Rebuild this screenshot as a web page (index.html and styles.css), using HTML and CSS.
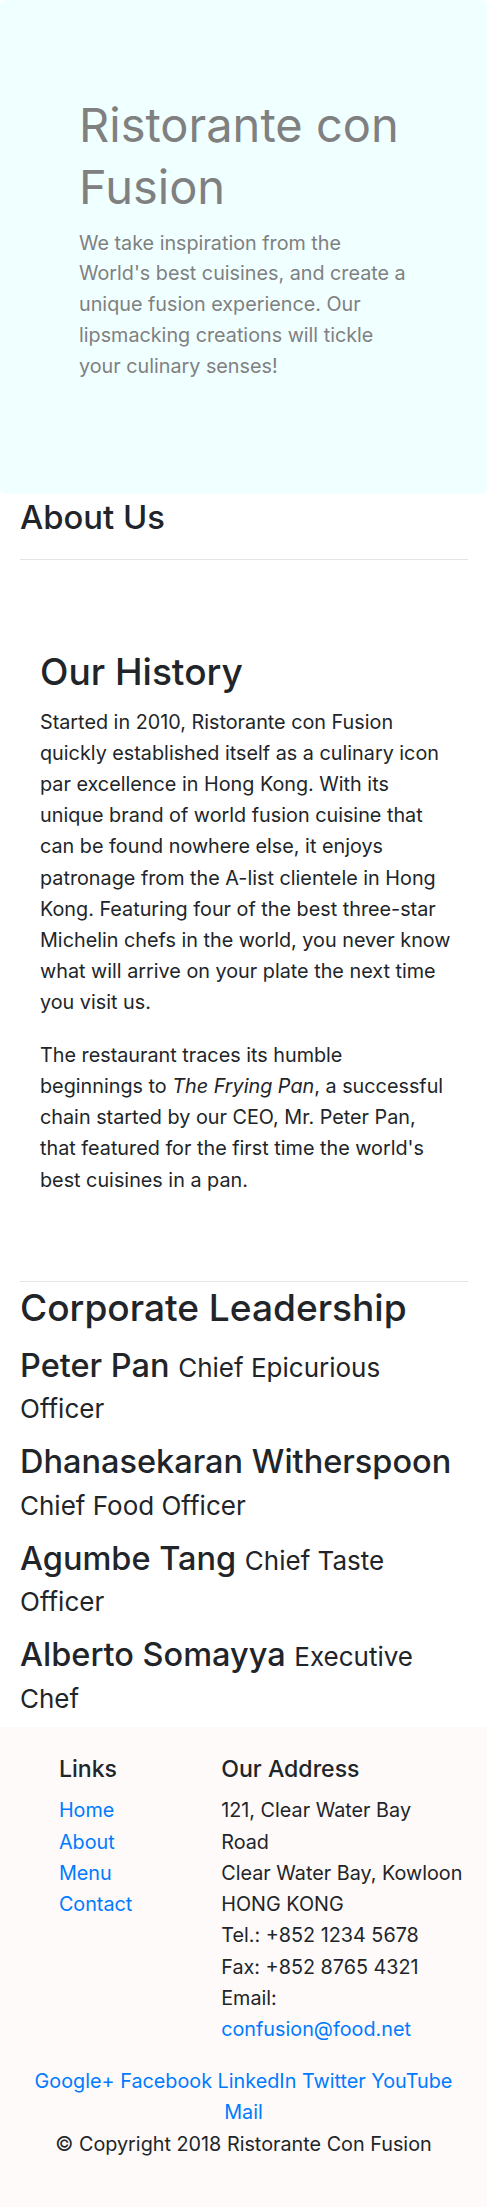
FILE: index.html
```html
<!DOCTYPE html>
<html lang="en">
<head>
<meta charset="utf-8">
<title>Ristorante con Fusion - About Us</title>
<link rel="stylesheet" href="styles.css">
</head>
<body>
<header class="jumbotron">
  <div class="jumbo-text">
    <h1 class="jumbo-title">Ristorante con Fusion</h1>
    <p class="jumbo-lead">We take inspiration from the World's best cuisines, and create a unique fusion experience. Our lipsmacking creations will tickle your culinary senses!</p>
  </div>
</header>
<main class="container">
  <section class="crumb">
    <h3 class="h3">About Us</h3>
    <hr class="rule rule-crumb">
  </section>
  <section class="history">
    <h2 class="h2">Our History</h2>
    <p class="para">Started in 2010, Ristorante con Fusion quickly established itself as a culinary icon par excellence in Hong Kong. With its unique brand of world fusion cuisine that can be found nowhere else, it enjoys patronage from the A-list clientele in Hong Kong. Featuring four of the best three-star Michelin chefs in the world, you never know what will arrive on your plate the next time you visit us.</p>
    <p class="para">The restaurant traces its humble<br>beginnings to <em>The Frying Pan</em>, a successful chain started by our CEO, Mr. Peter Pan, that featured for the first time the world's best cuisines in a pan.</p>
  </section>
  <hr class="rule rule-section">
  <section class="leaders">
    <h2 class="h2">Corporate Leadership</h2>
    <ul class="leader-list">
      <li class="leader"><h3 class="h3 leader-name">Peter Pan <small class="leader-role">Chief Epicurious Officer</small></h3></li>
      <li class="leader"><h3 class="h3 leader-name">Dhanasekaran Witherspoon <small class="leader-role">Chief Food Officer</small></h3></li>
      <li class="leader"><h3 class="h3 leader-name">Agumbe Tang <small class="leader-role">Chief Taste Officer</small></h3></li>
      <li class="leader"><h3 class="h3 leader-name">Alberto Somayya <small class="leader-role">Executive Chef</small></h3></li>
    </ul>
  </section>
</main>
<footer class="footer">
  <div class="footer-row">
    <div class="footer-col footer-links">
      <h5 class="h5">Links</h5>
      <ul class="plain-list">
        <li><a class="link" href="#">Home</a></li>
        <li><a class="link" href="#">About</a></li>
        <li><a class="link" href="#">Menu</a></li>
        <li><a class="link" href="#">Contact</a></li>
      </ul>
    </div>
    <div class="footer-col footer-address">
      <h5 class="h5">Our Address</h5>
      <address class="address">
        121, Clear Water Bay<br>Road<br>
        Clear Water Bay, Kowloon<br>
        HONG KONG<br>
        Tel.: +852 1234 5678<br>
        Fax: +852 8765 4321<br>
        Email:<br><a class="link" href="#">confusion@food.net</a>
      </address>
    </div>
  </div>
  <div class="social">
    <a class="link" href="#">Google+</a> <a class="link" href="#">Facebook</a> <a class="link" href="#">LinkedIn</a> <a class="link" href="#">Twitter</a> <a class="link" href="#">YouTube</a> <a class="link" href="#">Mail</a>
  </div>
  <p class="copyright">© Copyright 2018 Ristorante Con Fusion</p>
</footer>
</body>
</html>
```
FILE: styles.css
```css
* { box-sizing: border-box; }

body {
  margin: 0;
  font-family: Inter, "Noto Sans", "Liberation Sans", sans-serif;
  font-size: 19.8px;
  line-height: 31.2px;
  color: #212529;
  background: #fff;
}

h1, h2, h3, h5, p, ul { margin: 0; }

/* Jumbotron */
.jumbotron {
  background: #f0ffff;
  border-radius: 5px;
  height: 494px;
  padding: 94px 79px 0 79px;
}

.jumbo-title {
  font-size: 47px;
  line-height: 61.5px;
  font-weight: 400;
  color: #808080;
  margin-bottom: 10.5px;
}

.jumbo-lead {
  font-size: 19.75px;
  line-height: 30.8px;
  color: #808080;
}

/* Main content */
.container {
  padding: 0 19px 0 20px;
}

.h2 {
  font-size: 37.1px;
  line-height: 44.5px;
  font-weight: 500;
}

.h3 {
  font-size: 32.8px;
  line-height: 39.4px;
  font-weight: 500;
}

.h5 {
  font-size: 23.1px;
  line-height: 27.7px;
  font-weight: 500;
}

.crumb {
  padding-top: 4px;
}

.rule {
  border: 0;
  border-top: 1px solid rgba(0, 0, 0, 0.1);
  margin: 0;
}

.rule-crumb {
  margin-top: 21.6px;
}

.history {
  padding: 90px 0 0 20px;
  max-width: 432px;
}

.history .h2 { margin-bottom: 12px; }

.para + .para { margin-top: 21.2px; }

.rule-section {
  margin-top: 85.3px;
}

.leaders {
  padding-top: 3.5px;
  padding-bottom: 10.2px;
}

.leader-list {
  list-style: none;
  padding: 0;
  margin-top: 15px;
  display: flex;
  flex-direction: column;
  gap: 13.8px;
}

.leader-name {
  font-size: 32.5px;
  line-height: 41.3px;
}

.leader-role {
  font-size: 80%;
  font-weight: 400;
  line-height: 1;
}

/* Footer */
.footer {
  background: #fdfaf9;
  padding: 29px 0 47px;
  line-height: 31.2px;
}

.footer-row {
  display: flex;
}

.footer-col {
  padding: 0 18.3px;
}

.footer-links {
  margin-left: 8.3333%;
  flex: 0 0 33.3333%;
}

.footer-address {
  flex: 0 0 58.3333%;
}

.footer .h5 {
  margin-bottom: 11.8px;
}

.plain-list {
  list-style: none;
  padding: 0;
}

.address {
  font-style: normal;
  margin-bottom: 21.1px;
}

.link {
  color: #007bff;
  text-decoration: none;
}

.social {
  text-align: center;
  padding: 0 18.3px;
}

.copyright {
  text-align: center;
}
```
